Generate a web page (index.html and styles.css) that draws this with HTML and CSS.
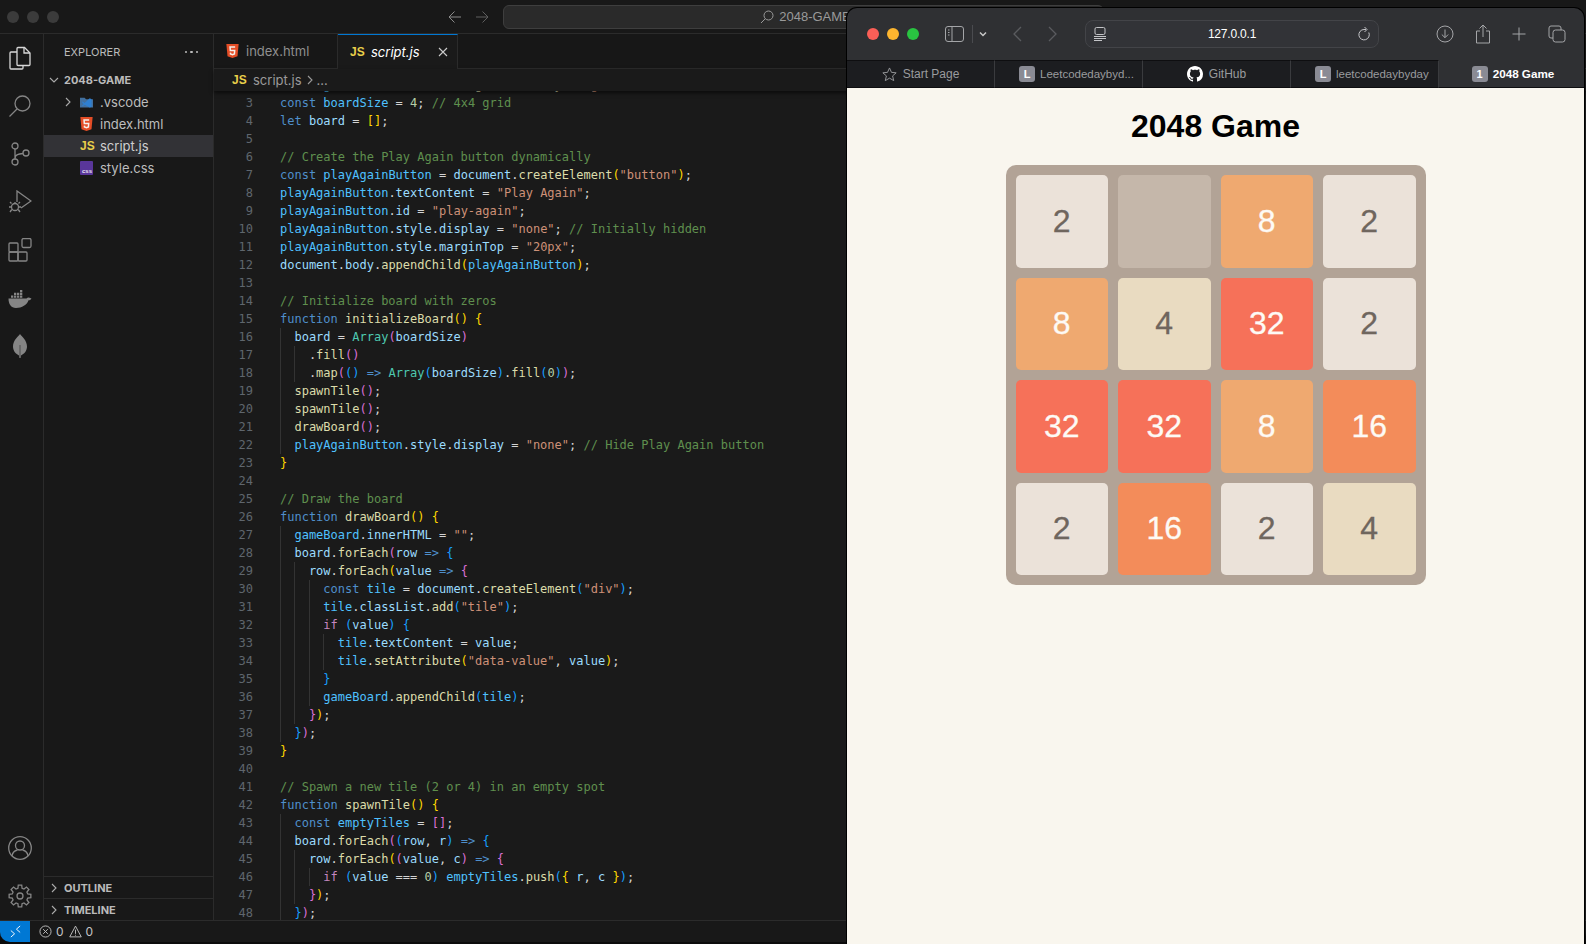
FILE: index.html
```html
<!DOCTYPE html>
<html lang="en">
<head>
    <meta charset="UTF-8">
    <meta name="viewport" content="width=device-width, initial-scale=1.0">
    <title>2048 Game</title>
    <link rel="stylesheet" href="styles.css">
</head>
<body>
    <!-- VS Code window -->
    <div class="vscode">
        <div class="titlebar">
            <div class="lights">
                <span class="light"></span><span class="light"></span><span class="light"></span>
            </div>
            <svg class="title-back" viewBox="0 0 14 14"><path d="M13 7H1M6.5 1.5L1 7l5.5 5.5"/></svg>
            <svg class="title-fwd" viewBox="0 0 14 14"><path d="M1 7h12M7.5 1.5L13 7l-5.5 5.5"/></svg>
            <div class="command-center">
                <svg viewBox="0 0 14 14"><circle cx="8.5" cy="5.5" r="4.5"/><path d="M5.3 8.7L1 13"/></svg>
                <span>2048-GAME</span>
            </div>
        </div>

        <div class="workbench">
            <!-- Activity bar -->
            <div class="activity">
                <div class="activity-group">
                    <div class="activity-item active">
                        <svg viewBox="0 0 24 24"><path d="M10 1.5h6.5l5.5 5.5v11.5a1 1 0 0 1-1 1H10a1 1 0 0 1-1-1v-16a1 1 0 0 1 1-1z"/><path d="M16 1.5V7h6"/><path d="M9 6H3a1 1 0 0 0-1 1v15a1 1 0 0 0 1 1h11a1 1 0 0 0 1-1v-2.5"/></svg>
                    </div>
                    <div class="activity-item">
                        <svg viewBox="0 0 24 24"><circle cx="14.5" cy="9.5" r="7.5"/><path d="M9 15L1.5 22.5"/></svg>
                    </div>
                    <div class="activity-item">
                        <svg viewBox="0 0 24 24"><circle cx="7" cy="4" r="3"/><circle cx="7" cy="20" r="3"/><circle cx="18" cy="11" r="3"/><path d="M7 7v10M15 11.5c-4 .5-8 1-8 5"/></svg>
                    </div>
                    <div class="activity-item">
                        <svg viewBox="0 0 24 24"><path d="M9 12V1l14 10-10 7"/><circle cx="7" cy="17" r="3.5"/><path d="M7 13.5V12M3.5 17H1M13 17h-2.5M3.500 13.5L2 12M10.500 13.5L12 12M3.800 19.5L2 22M10.200 19.5L12 22"/></svg>
                    </div>
                    <div class="activity-item">
                        <svg viewBox="0 0 24 24"><rect x="1" y="5" width="9" height="9" rx="1"/><rect x="1" y="14" width="9" height="9" rx="1"/><rect x="10" y="14" width="9" height="9" rx="1"/><rect x="14" y="0.5" width="9" height="9" rx="1.5"/></svg>
                    </div>
                    <div class="activity-item">
                        <svg class="solid" viewBox="0 0 24 24"><path d="M.5 12.5h18c.8-1 2-1.200 3-.8l2 .8c-.8 1.300-1.800 1.800-3 1.800C19 19 14 22 8 22c-5 0-7.500-4-7.500-9.500z"/><path d="M3 9.500h2.300v2.300H3zM6 9.500h2.300v2.300H6zM9 9.500h2.300v2.300H9zM12 9.500h2.300v2.300H12zM6 6.700h2.300V9H6zM9 6.700h2.300V9H9zM12 6.700h2.300V9H12zM12 3.900h2.300v2.300H12z"/></svg>
                    </div>
                    <div class="activity-item">
                        <svg class="solid" viewBox="0 0 24 24"><path d="M12 0c1.500 2.500 7 6 7 12.500 0 4.500-3 7.500-6 9L12.500 24h-1l-.5-2.500c-3-1.500-6-4.500-6-9C5 6 10.500 2.500 12 0z"/><path class="leaf-vein" d="M11.300 11h1.400v12h-1.400z"/></svg>
                    </div>
                </div>
                <div class="activity-group">
                    <div class="activity-item">
                        <svg viewBox="0 0 24 24"><circle cx="12" cy="12" r="11.3"/><circle cx="12" cy="9.5" r="4.5"/><path d="M4 20c.5-3.500 3-5.500 5.500-6M20 20c-.5-3.500-3-5.500-5.500-6"/></svg>
                    </div>
                    <div class="activity-item">
                        <svg viewBox="0 0 24 24"><polygon points="9.93,4.27 10.28,1.14 13.72,1.14 14.07,4.27 16,5.07 18.47,3.1 20.9,5.53 18.93,8 19.73,9.93 22.86,10.28 22.86,13.72 19.73,14.07 18.93,16 20.9,18.47 18.47,20.9 16,18.93 14.07,19.73 13.72,22.86 10.28,22.86 9.93,19.73 8,18.93 5.53,20.9 3.1,18.47 5.07,16 4.27,14.07 1.14,13.72 1.14,10.28 4.27,9.93 5.07,8 3.1,5.53 5.53,3.1 8,5.07"/><circle cx="12" cy="12" r="3"/></svg>
                    </div>
                </div>
            </div>

            <!-- Explorer -->
            <div class="sidebar">
                <div class="sidebar-head">
                    <span>EXPLORER</span>
                    <span class="dots"><i></i><i></i><i></i></span>
                </div>
                <div class="tree-root">
                    <svg class="chev" viewBox="0 0 10 10"><path d="M1 3l4 4 4-4"/></svg>
                    <span>2048-GAME</span>
                </div>
                <div class="tree-row">
                    <svg class="chev chev-folder" viewBox="0 0 10 10"><path d="M3 1l4 4-4 4"/></svg>
                    <svg class="file-icon" viewBox="0 0 14 14"><path class="folder-back" d="M0 2.5h5L6.5 4H14v9H0z"/><path class="folder-logo" d="M10.5 3L5 8 3 6.500 2 7l2 2.500L2 11l1 .5 2-1.500 5.500 3 2-1V4z"/></svg>
                    <span>.vscode</span>
                </div>
                <div class="tree-row">
                    <svg class="file-icon" viewBox="1 0 14 16"><path class="html-shield" d="M1 0h14l-1.300 14L8 16l-5.700-2z"/><path class="html-five" d="M11 3.500H5.200l.3 4h5l-.3 3.800L8 12.200l-2.300-.9-.1-1.400"/></svg>
                    <span>index.html</span>
                </div>
                <div class="tree-row selected">
                    <span class="js-icon">JS</span>
                    <span>script.js</span>
                </div>
                <div class="tree-row">
                    <span class="css-icon">css</span>
                    <span>style.css</span>
                </div>
                <div class="sidebar-spacer"></div>
                <div class="pane-row">
                    <svg class="chev" viewBox="0 0 10 10"><path d="M3 1l4 4-4 4"/></svg>
                    <span>OUTLINE</span>
                </div>
                <div class="pane-row">
                    <svg class="chev" viewBox="0 0 10 10"><path d="M3 1l4 4-4 4"/></svg>
                    <span>TIMELINE</span>
                </div>
            </div>

            <!-- Editor -->
            <div class="editor">
                <div class="tabs">
                    <div class="tab tab-index">
                        <svg class="file-icon" viewBox="1 0 14 16"><path class="html-shield" d="M1 0h14l-1.300 14L8 16l-5.700-2z"/><path class="html-five" d="M11 3.500H5.200l.3 4h5l-.3 3.800L8 12.200l-2.300-.9-.1-1.400"/></svg>
                        <span>index.html</span>
                    </div>
                    <div class="tab tab-active">
                        <span class="js-icon">JS</span>
                        <span class="tab-name">script.js</span>
                        <svg class="tab-close" viewBox="0 0 10 10"><path d="M1 1l8 8M9 1l-8 8"/></svg>
                    </div>
                </div>
                <div class="breadcrumbs">
                    <span class="js-icon">JS</span>
                    <span>script.js</span>
                    <svg class="crumb-sep" viewBox="0 0 10 10"><path d="M3 1l4 4-4 4"/></svg>
                    <span>...</span>
                </div>
                <div class="code">
                    <div class="code-inner">
<div class="ln"><span class="num">2</span><span class="src"><span class="k">const</span> <span class="c">gameBoard</span> = <span class="v">document</span>.<span class="f">getElementById</span><span class="y">(</span><span class="s">"game-board"</span><span class="y">)</span>;</span></div>
<div class="ln"><span class="num">3</span><span class="src"><span class="k">const</span> <span class="c">boardSize</span> = <span class="n">4</span>; <span class="m">// 4x4 grid</span></span></div>
<div class="ln"><span class="num">4</span><span class="src"><span class="k">let</span> <span class="v">board</span> = <span class="y">[]</span>;</span></div>
<div class="ln"><span class="num">5</span></div>
<div class="ln"><span class="num">6</span><span class="src"><span class="m">// Create the Play Again button dynamically</span></span></div>
<div class="ln"><span class="num">7</span><span class="src"><span class="k">const</span> <span class="c">playAgainButton</span> = <span class="v">document</span>.<span class="f">createElement</span><span class="y">(</span><span class="s">"button"</span><span class="y">)</span>;</span></div>
<div class="ln"><span class="num">8</span><span class="src"><span class="c">playAgainButton</span>.<span class="v">textContent</span> = <span class="s">"Play Again"</span>;</span></div>
<div class="ln"><span class="num">9</span><span class="src"><span class="c">playAgainButton</span>.<span class="v">id</span> = <span class="s">"play-again"</span>;</span></div>
<div class="ln"><span class="num">10</span><span class="src"><span class="c">playAgainButton</span>.<span class="v">style</span>.<span class="v">display</span> = <span class="s">"none"</span>; <span class="m">// Initially hidden</span></span></div>
<div class="ln"><span class="num">11</span><span class="src"><span class="c">playAgainButton</span>.<span class="v">style</span>.<span class="v">marginTop</span> = <span class="s">"20px"</span>;</span></div>
<div class="ln"><span class="num">12</span><span class="src"><span class="v">document</span>.<span class="v">body</span>.<span class="f">appendChild</span><span class="y">(</span><span class="c">playAgainButton</span><span class="y">)</span>;</span></div>
<div class="ln"><span class="num">13</span></div>
<div class="ln"><span class="num">14</span><span class="src"><span class="m">// Initialize board with zeros</span></span></div>
<div class="ln"><span class="num">15</span><span class="src"><span class="k">function</span> <span class="f">initializeBoard</span><span class="y">()</span> <span class="y">{</span></span></div>
<div class="ln"><span class="num">16</span><span class="src"><i class="ind"></i><span class="v">board</span> = <span class="t">Array</span><span class="p">(</span><span class="v">boardSize</span><span class="p">)</span></span></div>
<div class="ln"><span class="num">17</span><span class="src"><i class="ind"></i><i class="ind"></i>.<span class="f">fill</span><span class="p">()</span></span></div>
<div class="ln"><span class="num">18</span><span class="src"><i class="ind"></i><i class="ind"></i>.<span class="f">map</span><span class="p">(</span><span class="b">()</span> <span class="k">=&gt;</span> <span class="t">Array</span><span class="b">(</span><span class="v">boardSize</span><span class="b">)</span>.<span class="f">fill</span><span class="b">(</span><span class="n">0</span><span class="b">)</span><span class="p">)</span>;</span></div>
<div class="ln"><span class="num">19</span><span class="src"><i class="ind"></i><span class="f">spawnTile</span><span class="p">()</span>;</span></div>
<div class="ln"><span class="num">20</span><span class="src"><i class="ind"></i><span class="f">spawnTile</span><span class="p">()</span>;</span></div>
<div class="ln"><span class="num">21</span><span class="src"><i class="ind"></i><span class="f">drawBoard</span><span class="p">()</span>;</span></div>
<div class="ln"><span class="num">22</span><span class="src"><i class="ind"></i><span class="c">playAgainButton</span>.<span class="v">style</span>.<span class="v">display</span> = <span class="s">"none"</span>; <span class="m">// Hide Play Again button</span></span></div>
<div class="ln"><span class="num">23</span><span class="src"><span class="y">}</span></span></div>
<div class="ln"><span class="num">24</span></div>
<div class="ln"><span class="num">25</span><span class="src"><span class="m">// Draw the board</span></span></div>
<div class="ln"><span class="num">26</span><span class="src"><span class="k">function</span> <span class="f">drawBoard</span><span class="y">()</span> <span class="y">{</span></span></div>
<div class="ln"><span class="num">27</span><span class="src"><i class="ind"></i><span class="c">gameBoard</span>.<span class="v">innerHTML</span> = <span class="s">""</span>;</span></div>
<div class="ln"><span class="num">28</span><span class="src"><i class="ind"></i><span class="v">board</span>.<span class="f">forEach</span><span class="p">(</span><span class="v">row</span> <span class="k">=&gt;</span> <span class="b">{</span></span></div>
<div class="ln"><span class="num">29</span><span class="src"><i class="ind"></i><i class="ind"></i><span class="v">row</span>.<span class="f">forEach</span><span class="y">(</span><span class="v">value</span> <span class="k">=&gt;</span> <span class="p">{</span></span></div>
<div class="ln"><span class="num">30</span><span class="src"><i class="ind"></i><i class="ind"></i><i class="ind"></i><span class="k">const</span> <span class="c">tile</span> = <span class="v">document</span>.<span class="f">createElement</span><span class="b">(</span><span class="s">"div"</span><span class="b">)</span>;</span></div>
<div class="ln"><span class="num">31</span><span class="src"><i class="ind"></i><i class="ind"></i><i class="ind"></i><span class="c">tile</span>.<span class="v">classList</span>.<span class="f">add</span><span class="b">(</span><span class="s">"tile"</span><span class="b">)</span>;</span></div>
<div class="ln"><span class="num">32</span><span class="src"><i class="ind"></i><i class="ind"></i><i class="ind"></i><span class="x">if</span> <span class="b">(</span><span class="v">value</span><span class="b">)</span> <span class="b">{</span></span></div>
<div class="ln"><span class="num">33</span><span class="src"><i class="ind"></i><i class="ind"></i><i class="ind"></i><i class="ind"></i><span class="c">tile</span>.<span class="v">textContent</span> = <span class="v">value</span>;</span></div>
<div class="ln"><span class="num">34</span><span class="src"><i class="ind"></i><i class="ind"></i><i class="ind"></i><i class="ind"></i><span class="c">tile</span>.<span class="f">setAttribute</span><span class="y">(</span><span class="s">"data-value"</span>, <span class="v">value</span><span class="y">)</span>;</span></div>
<div class="ln"><span class="num">35</span><span class="src"><i class="ind"></i><i class="ind"></i><i class="ind"></i><span class="b">}</span></span></div>
<div class="ln"><span class="num">36</span><span class="src"><i class="ind"></i><i class="ind"></i><i class="ind"></i><span class="c">gameBoard</span>.<span class="f">appendChild</span><span class="b">(</span><span class="c">tile</span><span class="b">)</span>;</span></div>
<div class="ln"><span class="num">37</span><span class="src"><i class="ind"></i><i class="ind"></i><span class="p">}</span><span class="y">)</span>;</span></div>
<div class="ln"><span class="num">38</span><span class="src"><i class="ind"></i><span class="b">}</span><span class="p">)</span>;</span></div>
<div class="ln"><span class="num">39</span><span class="src"><span class="y">}</span></span></div>
<div class="ln"><span class="num">40</span></div>
<div class="ln"><span class="num">41</span><span class="src"><span class="m">// Spawn a new tile (2 or 4) in an empty spot</span></span></div>
<div class="ln"><span class="num">42</span><span class="src"><span class="k">function</span> <span class="f">spawnTile</span><span class="y">()</span> <span class="y">{</span></span></div>
<div class="ln"><span class="num">43</span><span class="src"><i class="ind"></i><span class="k">const</span> <span class="c">emptyTiles</span> = <span class="p">[]</span>;</span></div>
<div class="ln"><span class="num">44</span><span class="src"><i class="ind"></i><span class="v">board</span>.<span class="f">forEach</span><span class="p">(</span><span class="b">(</span><span class="v">row</span>, <span class="v">r</span><span class="b">)</span> <span class="k">=&gt;</span> <span class="b">{</span></span></div>
<div class="ln"><span class="num">45</span><span class="src"><i class="ind"></i><i class="ind"></i><span class="v">row</span>.<span class="f">forEach</span><span class="y">(</span><span class="p">(</span><span class="v">value</span>, <span class="v">c</span><span class="p">)</span> <span class="k">=&gt;</span> <span class="p">{</span></span></div>
<div class="ln"><span class="num">46</span><span class="src"><i class="ind"></i><i class="ind"></i><i class="ind"></i><span class="x">if</span> <span class="b">(</span><span class="v">value</span> === <span class="n">0</span><span class="b">)</span> <span class="c">emptyTiles</span>.<span class="f">push</span><span class="b">(</span><span class="y">{</span> <span class="v">r</span>, <span class="v">c</span> <span class="y">}</span><span class="b">)</span>;</span></div>
<div class="ln"><span class="num">47</span><span class="src"><i class="ind"></i><i class="ind"></i><span class="p">}</span><span class="y">)</span>;</span></div>
<div class="ln"><span class="num">48</span><span class="src"><i class="ind"></i><span class="b">}</span><span class="p">)</span>;</span></div>
                    </div>
                </div>
            </div>
        </div>

        <div class="statusbar">
            <div class="remote">
                <svg viewBox="0 0 14 14"><path d="M2 6l4 3.5L2 13M12 1L8 4.5 12 8"/></svg>
            </div>
            <svg class="status-icon" viewBox="0 0 14 14"><circle cx="7" cy="7" r="6"/><path d="M4.5 4.5l5 5M9.5 4.5l-5 5"/></svg>
            <span class="status-count">0</span>
            <svg class="status-icon warn" viewBox="0 0 14 14"><path d="M7 1.200L13.200 12.800H.8z"/><path d="M7 5v4.500M7 10.500v1"/></svg>
            <span class="status-count">0</span>
        </div>
    </div>

    <!-- Safari window, floats over the editor -->
    <div class="safari">
        <div class="toolbar">
            <div class="lights">
                <span class="light red"></span><span class="light yellow"></span><span class="light green"></span>
            </div>
            <svg class="tool-sidebar" viewBox="0 0 19 16"><rect x="0.5" y="0.5" width="18" height="15" rx="2.5"/><path d="M7 .5v15M3 4h1.500M3 6.500h1.500M3 9h1.500"/></svg>
            <span class="tool-divider"></span>
            <svg class="tool-caret" viewBox="0 0 8 6"><path d="M1 1.500l3 3 3-3"/></svg>
            <svg class="tool-back" viewBox="0 0 10 16"><path d="M9 1L2 8l7 7"/></svg>
            <svg class="tool-fwd" viewBox="0 0 10 16"><path d="M1 1l7 7-7 7"/></svg>
            <div class="urlbar">
                <svg class="url-reader" viewBox="0 0 14 14"><rect x="2" y="0.5" width="10" height="7" rx="1.5"/><path d="M1 9.500h12M1 11.500h12M1 13.500h8"/></svg>
                <span class="url-text">127.0.0.1</span>
                <svg class="url-reload" viewBox="0 0 14 14"><path d="M11.800 5.500A5.200 5.200 0 1 1 7 2.500h2"/><path d="M7.500 0L10 2.500 7.500 5"/></svg>
            </div>
            <svg class="tool-download" viewBox="0 0 18 18"><circle cx="9" cy="9" r="8"/><path d="M9 4.500v8M5.800 9.500L9 12.700l3.200-3.200"/></svg>
            <svg class="tool-share" viewBox="0 0 16 20"><path d="M5 7H1.500v12h13V7H11"/><path d="M8 13V1M4.500 4.500L8 1l3.500 3.500"/></svg>
            <svg class="tool-plus" viewBox="0 0 16 16"><path d="M8 1.500v13M1.500 8h13"/></svg>
            <svg class="tool-tabs" viewBox="0 0 18 18"><rect x="5" y="5" width="12" height="12" rx="2.5"/><path d="M5 13H3a2 2 0 0 1-2-2V3a2 2 0 0 1 2-2h8a2 2 0 0 1 2 2v2"/></svg>
        </div>
        <div class="tabstrip">
            <div class="stab">
                <svg class="star" viewBox="0 0 16 16"><path d="M8 1l2.100 4.700 5 .5-3.800 3.300 1.200 5L8 11.900l-4.500 2.600 1.200-5L.9 6.200l5-.5z"/></svg>
                <span>Start Page</span>
            </div>
            <div class="stab stab-long">
                <span class="favicon">L</span>
                <span>Leetcodedaybyd...</span>
            </div>
            <div class="stab">
                <svg class="gh" viewBox="0 0 16 16"><path d="M8 0C3.580 0 0 3.580 0 8c0 3.540 2.290 6.530 5.470 7.590.4.070.55-.17.55-.38 0-.19-.01-.82-.01-1.490-2.010.37-2.530-.49-2.690-.94-.09-.23-.48-.94-.82-1.130-.28-.15-.68-.52-.01-.53.63-.01 1.080.58 1.230.82.720 1.210 1.870.87 2.330.66.070-.52.28-.87.51-1.070-1.780-.2-3.640-.89-3.640-3.950 0-.87.31-1.590.82-2.150-.08-.2-.36-1.020.08-2.120 0 0 .67-.21 2.200.82.640-.18 1.320-.27 2-.27.680 0 1.360.09 2 .27 1.530-1.040 2.200-.82 2.200-.82.440 1.100.16 1.920.08 2.120.51.56.82 1.270.82 2.150 0 3.070-1.870 3.750-3.650 3.950.29.25.54.73.54 1.480 0 1.070-.01 1.930-.01 2.200 0 .21.15.46.55.38A8.013 8.013 0 0 0 16 8c0-4.420-3.580-8-8-8z"/></svg>
                <span>GitHub</span>
            </div>
            <div class="stab stab-long">
                <span class="favicon">L</span>
                <span>leetcodedaybyday</span>
            </div>
            <div class="stab stab-active">
                <span class="favicon">1</span>
                <span>2048 Game</span>
            </div>
        </div>
        <div class="page">
            <h1>2048 Game</h1>
            <div class="board">
                <div class="tile t2">2</div>
                <div class="tile"></div>
                <div class="tile t8">8</div>
                <div class="tile t2">2</div>
                <div class="tile t8">8</div>
                <div class="tile t4">4</div>
                <div class="tile t32">32</div>
                <div class="tile t2">2</div>
                <div class="tile t32">32</div>
                <div class="tile t32">32</div>
                <div class="tile t8">8</div>
                <div class="tile t16">16</div>
                <div class="tile t2">2</div>
                <div class="tile t16">16</div>
                <div class="tile t2">2</div>
                <div class="tile t4">4</div>
            </div>
        </div>
    </div>
</body>
</html>
```

FILE: styles.css
```css
/* Basic reset */
* {
    margin: 0;
    padding: 0;
    box-sizing: border-box;
}

html, body {
    height: 100%;
    overflow: hidden;
}

body {
    font-family: 'Inter', 'Liberation Sans', sans-serif;
    background-color: #0b0b0b;
    color: #ccc;
    position: relative;
}

svg {
    display: block;
    fill: none;
    stroke: currentColor;
    flex-shrink: 0;
}

/* VS Code window */
.vscode {
    height: 942px;
    display: flex;
    flex-direction: column;
    background-color: #181818;
    border-radius: 0 0 10px 10px;
    overflow: hidden;
}

.titlebar {
    height: 34px;
    flex-shrink: 0;
    display: flex;
    align-items: center;
    padding-left: 7px;
    border-bottom: 1px solid #2b2b2b;
    color: #8a8a8a;
}

.lights {
    display: flex;
    gap: 8px;
}

.light {
    width: 12px;
    height: 12px;
    border-radius: 50%;
    background-color: #3b3b3b;
}

.title-back,
.title-fwd {
    width: 14px;
    height: 14px;
}

.title-back {
    margin-left: 389px;
}

.title-fwd {
    margin-left: 13px;
    color: #5e5e5e;
}

.command-center {
    width: 601px;
    height: 24px;
    margin-left: 14px;
    padding-left: 4px;
    display: flex;
    align-items: center;
    justify-content: center;
    gap: 5px;
    font-family: 'Liberation Sans', sans-serif;
    font-size: 13px;
    color: #9a9a9a;
    background-color: #2a2a2a;
    border: 1px solid #3e3e3e;
    border-radius: 6px;
}

.command-center svg {
    width: 14px;
    height: 14px;
}

.workbench {
    flex: 1;
    min-height: 0;
    display: flex;
}

/* Activity bar */
.activity {
    width: 44px;
    flex-shrink: 0;
    display: flex;
    flex-direction: column;
    justify-content: space-between;
    border-right: 1px solid #2b2b2b;
}

.activity-item {
    height: 48px;
    padding-right: 3px;
    display: flex;
    align-items: center;
    justify-content: center;
    color: #858585;
}

.activity-item svg {
    width: 24px;
    height: 24px;
    stroke-width: 1.3;
}

.activity-item.active {
    color: #d7d7d7;
}

.activity-item svg.solid {
    fill: currentColor;
    stroke: none;
}

.leaf-vein {
    fill: #5d5d5d;
}

/* Explorer */
.sidebar {
    width: 170px;
    flex-shrink: 0;
    display: flex;
    flex-direction: column;
    border-right: 1px solid #2b2b2b;
    font-size: 13px;
}

.sidebar-head {
    height: 35px;
    flex-shrink: 0;
    display: flex;
    align-items: center;
    justify-content: space-between;
    padding: 1px 15px 0 20px;
    font-size: 11px;
    color: #bbb;
}

.dots {
    display: flex;
    gap: 3px;
}

.dots i {
    width: 2.5px;
    height: 2.5px;
    border-radius: 50%;
    background-color: #bbb;
}

.tree-root,
.pane-row {
    height: 22px;
    flex-shrink: 0;
    display: flex;
    align-items: center;
    font-size: 11px;
    font-weight: 700;
    color: #bbb;
}

.tree-root {
    padding-left: 5px;
    gap: 5px;
}

.chev {
    width: 10px;
    height: 10px;
    color: #aaa;
    stroke-width: 1.1;
}

.tree-row {
    height: 22px;
    flex-shrink: 0;
    display: flex;
    align-items: center;
    gap: 7px;
    padding-left: 36px;
    font-size: 13px;
    color: #bdbdbd;
}

.tree-row.selected {
    background-color: #323236;
    color: #cfcfcf;
}

.chev-folder {
    margin-left: -17px;
}

.sidebar-spacer {
    flex: 1;
}

.pane-row {
    gap: 5px;
    padding-left: 5px;
    border-top: 1px solid #2b2b2b;
}

/* File type icons */
.file-icon {
    width: 13px;
    height: 14px;
}

.file-icon .folder-back {
    fill: #42709f;
    stroke: none;
}

.file-icon .folder-logo {
    fill: #2f7fd0;
    stroke: none;
}

.html-shield {
    fill: #e44d26;
    stroke: none;
}

.html-five {
    stroke: #f5f0ec;
    stroke-width: 1.7;
}

.js-icon {
    width: 13px;
    flex-shrink: 0;
    font-family: 'Liberation Sans', sans-serif;
    font-size: 12px;
    font-weight: 700;
    color: #e8cf4a;
}

.css-icon {
    width: 13px;
    height: 14px;
    flex-shrink: 0;
    display: flex;
    align-items: flex-end;
    justify-content: flex-end;
    padding: 0 1px 1px 0;
    font-family: 'Liberation Sans', sans-serif;
    font-size: 6px;
    font-weight: 700;
    line-height: 6px;
    color: #e9e4f2;
    background-color: #59369a;
    border-radius: 1px;
}

/* Editor */
.editor {
    flex: 1;
    min-width: 0;
    display: flex;
    flex-direction: column;
    background-color: #1a1a1a;
}

.tabs {
    height: 35px;
    flex-shrink: 0;
    display: flex;
    background-color: #171717;
    border-bottom: 1px solid #2b2b2b;
}

.tab {
    display: flex;
    align-items: center;
    font-size: 13px;
    border-right: 1px solid #2b2b2b;
}

.tab-index {
    width: 124px;
    padding-left: 12px;
    gap: 7px;
    color: #8f8f8f;
}

.tab-active {
    width: 120px;
    height: 35px;
    padding-left: 12px;
    color: #fff;
    background-color: #1a1a1a;
    border-top: 1px solid #0078d4;
}

.tab-name {
    margin-left: 8px;
    font-style: italic;
}

.tab-close {
    width: 10px;
    height: 10px;
    margin-left: 18px;
    color: #ccc;
    stroke-width: 1.1;
}

.breadcrumbs {
    height: 22px;
    flex-shrink: 0;
    display: flex;
    align-items: center;
    gap: 8px;
    padding-left: 18px;
    font-size: 13px;
    color: #9a9a9a;
    position: relative;
    z-index: 1;
    box-shadow: 0 2px 4px rgba(0, 0, 0, 0.6);
    background-color: #1a1a1a;
}

.crumb-sep {
    width: 10px;
    height: 10px;
    margin: 0 -6px 0 -5px;
    stroke-width: 1.1;
}

.code {
    flex: 1;
    min-height: 0;
    overflow: hidden;
}

.code-inner {
    margin-top: -15px;
    font-family: 'DejaVu Sans Mono', monospace;
    font-size: 12px;
    line-height: 18px;
    color: #d4d4d4;
}

.ln {
    height: 18px;
    display: flex;
    white-space: pre;
}

.num {
    width: 39px;
    flex-shrink: 0;
    text-align: right;
    color: #5f666d;
}

.src {
    margin-left: 27px;
}

.ind {
    display: inline-block;
    width: 14.45px;
    height: 18px;
    vertical-align: top;
    border-left: 1px solid #333;
}

/* Syntax colours */
.k { color: #4f8fcb; }
.c { color: #4fc1ff; }
.v { color: #9cdcfe; }
.f { color: #dcdcaa; }
.s { color: #ce9178; }
.n { color: #b5cea8; }
.m { color: #5f8f4e; }
.t { color: #4ec9b0; }
.x { color: #c586c0; }
.y { color: #ffd700; }
.p { color: #da70d6; }
.b { color: #179fff; }

/* Status bar */
.statusbar {
    height: 22px;
    flex-shrink: 0;
    display: flex;
    align-items: center;
    font-size: 12px;
    color: #c4c4c4;
    border-top: 1px solid #2b2b2b;
}

.remote {
    width: 30px;
    height: 21px;
    display: flex;
    align-items: center;
    justify-content: center;
    color: #fff;
    background-color: #0078d4;
}

.remote svg {
    width: 13px;
    height: 13px;
}

.status-icon {
    width: 13px;
    height: 13px;
    margin-left: 9px;
    stroke-width: 1;
}

.status-icon.warn {
    margin-left: 5px;
}

.status-count {
    margin-left: 4px;
}

/* Safari window */
.safari {
    position: absolute;
    left: 847px;
    top: 8px;
    z-index: 2;
    width: 737px;
    height: 936px;
    display: flex;
    flex-direction: column;
    border-radius: 10px 10px 0 0;
    overflow: hidden;
    background-color: #2f3033;
    box-shadow: 0 0 0 1px #000;
}

.toolbar {
    height: 52px;
    flex-shrink: 0;
    display: flex;
    align-items: center;
    padding-left: 20px;
    color: #a4a5a8;
}

.light.red { background-color: #fb5f57; }
.light.yellow { background-color: #fdb52f; }
.light.green { background-color: #29c441; }

.tool-sidebar {
    width: 19px;
    height: 16px;
    margin-left: 26px;
}

.tool-divider {
    width: 1px;
    height: 18px;
    margin-left: 8px;
    background-color: #4a4b4f;
}

.tool-caret {
    width: 8px;
    height: 6px;
    margin-left: 6px;
    stroke-width: 1.5;
    color: #c8c8c8;
}

.tool-back,
.tool-fwd {
    width: 10px;
    height: 16px;
    color: #5a5b5f;
    stroke-width: 1.3;
}

.tool-back {
    margin-left: 25px;
}

.tool-fwd {
    margin-left: 26px;
}

.urlbar {
    width: 294px;
    height: 28px;
    margin-left: 27px;
    padding: 0 7px;
    display: flex;
    align-items: center;
    border: 1px solid #434448;
    border-radius: 8px;
    background-color: #323337;
}

.url-reader,
.url-reload {
    width: 14px;
    height: 14px;
    color: #c4c5c8;
}

.url-text {
    flex: 1;
    text-align: center;
    font-family: 'Liberation Sans', sans-serif;
    font-size: 12px;
    letter-spacing: -0.2px;
    color: #fff;
}

.tool-download {
    width: 18px;
    height: 18px;
    margin-left: 57px;
}

.tool-share {
    width: 16px;
    height: 20px;
    margin-left: 21px;
}

.tool-plus {
    width: 16px;
    height: 16px;
    margin-left: 20px;
}

.tool-tabs {
    width: 18px;
    height: 18px;
    margin-left: 21px;
}

.tabstrip {
    height: 28px;
    flex-shrink: 0;
    display: flex;
    font-family: 'Liberation Sans', sans-serif;
    font-size: 12px;
    color: #9a9b9e;
}

.stab {
    width: 148px;
    flex-shrink: 0;
    display: flex;
    align-items: center;
    justify-content: center;
    gap: 5px;
    background-color: #1c1d20;
    border-top: 1px solid #0e0e10;
    border-bottom: 1px solid #0e0e10;
    border-right: 1px solid #3a3b3e;
}

.stab-long {
    justify-content: flex-start;
    padding-left: 24px;
    font-size: 11.5px;
}

.stab-active {
    flex: 1;
    width: auto;
    padding-left: 3px;
    font-size: 11.7px;
    color: #fff;
    font-weight: 700;
    background-color: #2f3033;
    border-top: none;
    border-right: none;
}

.star {
    width: 15px;
    height: 15px;
    margin-right: 1px;
}

.gh {
    width: 16px;
    height: 16px;
    fill: #fff;
    stroke: none;
    margin-right: 1px;
}

.favicon {
    width: 16px;
    height: 16px;
    display: flex;
    align-items: center;
    justify-content: center;
    flex-shrink: 0;
    font-size: 11px;
    font-weight: 700;
    color: #fff;
    background-color: #8a8b94;
    border-radius: 3px;
}

/* The 2048 page */
.page {
    flex: 1;
    min-height: 0;
    padding-top: 20px;
    font-family: 'Liberation Sans', sans-serif;
    background-color: #f9f6ee;
    color: #000;
}

.page h1 {
    font-size: 32px;
    line-height: 37px;
    text-align: center;
    margin-bottom: 20px;
}

.board {
    width: 420px;
    height: 420px;
    margin: 0 auto;
    padding: 10px;
    display: grid;
    grid-template-columns: repeat(4, 1fr);
    grid-template-rows: repeat(4, 1fr);
    gap: 10px;
    background-color: #b2a396;
    border-radius: 10px;
}

.tile {
    display: flex;
    align-items: center;
    justify-content: center;
    font-size: 32px;
    -webkit-text-stroke: 0.3px currentColor;
    color: #6f665e;
    background-color: #c5b7aa;
    border-radius: 5px;
}

.t2 { background-color: #ebe2d9; }
.t4 { background-color: #e9dbc1; }
.t8 { background-color: #efa970; color: #fdfaf5; }
.t16 { background-color: #f38c5a; color: #fdfaf5; }
.t32 { background-color: #f67159; color: #fdfaf5; }
```
